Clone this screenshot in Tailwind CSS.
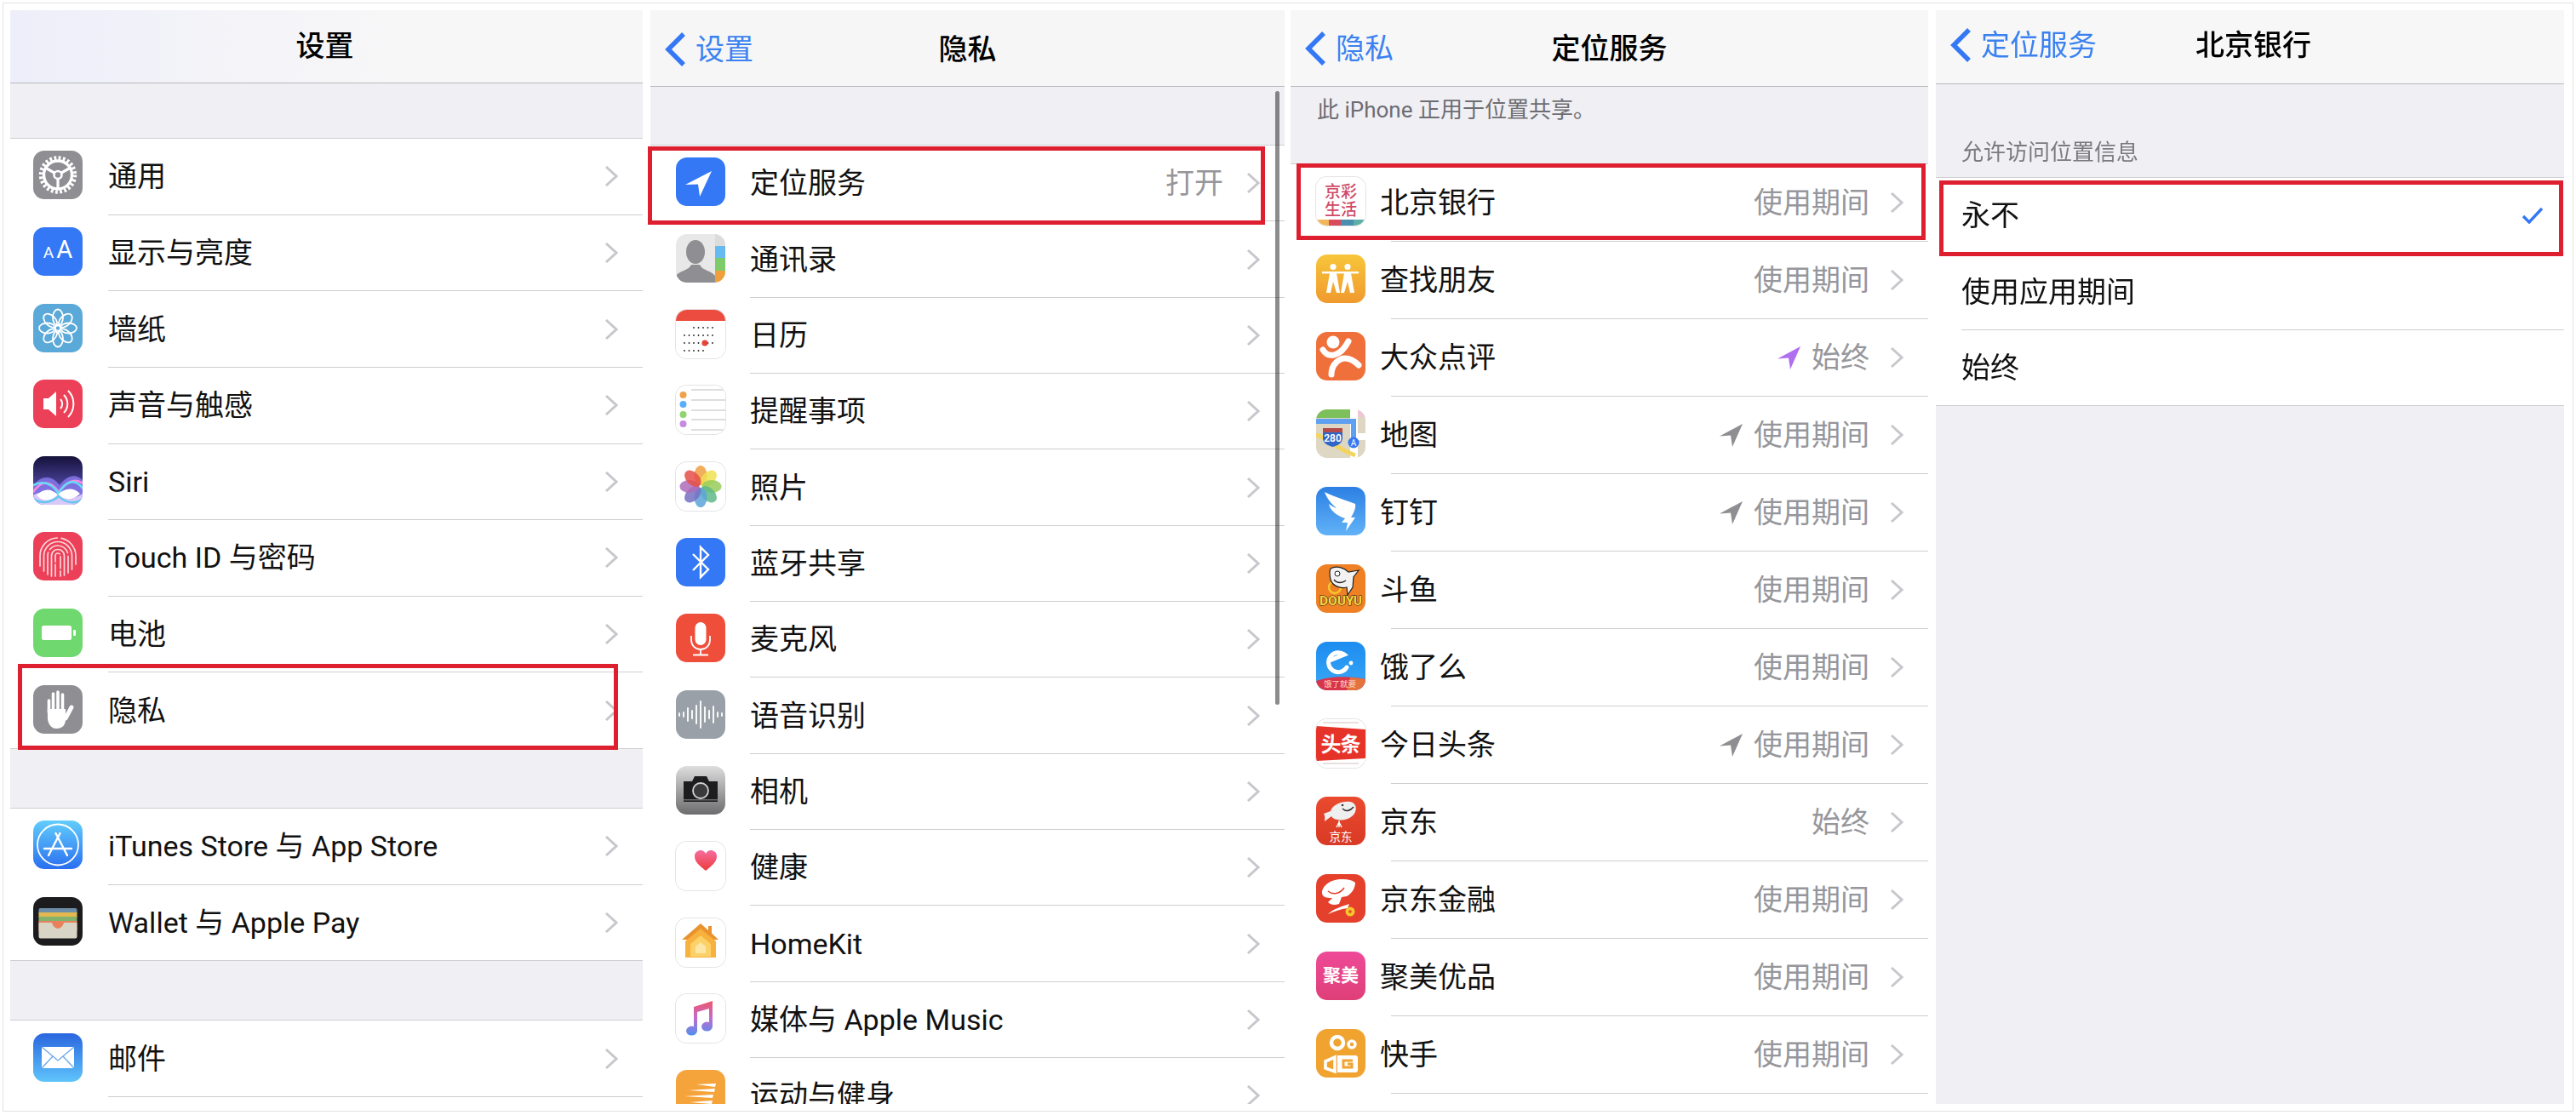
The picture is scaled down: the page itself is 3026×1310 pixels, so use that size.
<!DOCTYPE html>
<html lang="zh-CN">
<head>
    <meta charset="UTF-8">
    <title>iOS 定位服务设置</title>
    <script src="https://cdn.jsdelivr.net/npm/@tailwindcss/browser@4"></script>
</head>
<body class="bg-white">
<div class="w-[3026px] h-[1310px] bg-white pt-[3px] pl-[3px] overflow-hidden [font-family:Roboto,'Noto_Sans_CJK_SC',sans-serif] text-[#111]">
    <div class="w-[3020px] h-[1303px] border border-[#e2e2e4] flex items-start pt-[8px] blur-[0.5px]">
        <section id="p1" class="relative w-[743px] h-[1285px] ml-[8px]"></section>
        <section id="p2" class="relative w-[745px] h-[1285px] ml-[9px]"></section>
        <section id="p3" class="relative w-[749px] h-[1285px] ml-[7px]"></section>
        <section id="p4" class="relative w-[738px] h-[1285px] ml-[9px]"></section>
    </div>
</div>

<script>
    const svg = (body) => `<svg viewBox="0 0 58 57" class="w-[58px] h-[57px]">${body}</svg>`;
    const grad = (id, a, b) => `<defs><linearGradient id="${id}" x1="0" y1="0" x2="0" y2="1"><stop offset="0" stop-color="${a}"/><stop offset="1" stop-color="${b}"/></linearGradient></defs><rect width="58" height="57" fill="url(#${id})"/>`;
    const solid = (c) => `<rect width="58" height="57" fill="${c}"/>`;
    const around = (n, fn) => Array.from({ length: n }, (_, i) => fn(i * 360 / n, i)).join('');

    const icons = {
        general: svg(solid('#8e8e93') + `<g fill="none" stroke="#fff">
            <circle cx="29" cy="28.5" r="20" stroke-width="4.5" stroke-dasharray="2.8 2.44"/>
            <circle cx="29" cy="28.5" r="16.5" stroke-width="3.4"/>
            <circle cx="29" cy="28.5" r="4.5" stroke-width="2.6"/>
            <path stroke-width="3.2" d="M29 33V45M25 26.2L15 20.5M33 26.2L43 20.5"/></g>`),
        display: `<div class="w-full h-full bg-[#3478f6] flex items-baseline justify-center pt-[12px] text-white leading-none"><span class="text-[19px] mr-[3px]">A</span><span class="text-[29px]">A</span></div>`,
        wallpaper: svg(solid('#5aa9d8') + `<g fill="none" stroke="#fff" stroke-width="1.8">` + around(8, a => `<ellipse cx="29" cy="16" rx="6" ry="9.5" transform="rotate(${a} 29 28.5)"/>`) + `<circle cx="29" cy="28.5" r="3.5"/></g>`),
        sounds: svg(solid('#ec4058') + `<path fill="#fff" d="M12 22h6l9-8v29l-9-8h-6z"/><g fill="none" stroke="#fff" stroke-width="2"><path d="M32 23a8 8 0 0 1 0 11"/><path d="M36 18a15 15 0 0 1 0 21"/><path d="M41 13a22 22 0 0 1 0 31"/></g>`),
        siri: svg(grad('siriBg', '#15123a', '#6f63dc') + `
            <path fill="#8a7cf0" opacity=".8" d="M0 34C10 22 22 22 31 34C40 22 50 20 58 28V57H0Z"/>
            <path fill="none" stroke="#f58ade" stroke-width="2.6" d="M0 42C10 28 20 28 30 42C38 32 48 24 58 32"/>
            <path fill="none" stroke="#63dcf7" stroke-width="2.6" d="M0 34C12 28 22 32 30 44C38 28 50 26 58 38"/>
            <path fill="#d9c8f7" d="M0 46C8 40 20 42 29 46C38 50 50 50 58 44V57H0Z"/>
            <path fill="#fff" d="M4 46C13 37 21 38 29 45C37 52 47 52 55 44C47 36 37 37 29 45C21 53 12 54 4 46Z"/>
            <path fill="none" stroke="#63c8f0" stroke-width="2.4" d="M0 50C12 57 22 54 30 47C38 55 50 57 58 50"/>`),
        touch: svg(solid('#ec4058') + `<g fill="none" stroke="#fbd6db" stroke-width="1.7" stroke-linecap="round">
            <path d="M8 40V28A21 21 0 0 1 50 28V38" stroke-dasharray="44 5"/>
            <path d="M12.5 46V28A16.5 16.5 0 0 1 45.5 28V44"/>
            <path d="M17 50V28A12 12 0 0 1 41 28V48" stroke-dasharray="26 4"/>
            <path d="M21.5 52V28A7.5 7.5 0 0 1 36.5 28V51"/>
            <path d="M26 52V28A3 3 0 0 1 32 28V52" stroke-dasharray="14 3"/></g>`),
        battery: svg(solid('#6fd96f') + `<rect x="10" y="20" width="35" height="17" rx="2.5" fill="#fff"/><rect x="47" y="25" width="3" height="7" rx="1" fill="#fff"/>`),
        privacy: svg(solid('#8e8e93') + `<g stroke="#fff" stroke-linecap="round" fill="none"><path stroke-width="3.6" d="M18.5 18V32M23.5 10V32M29 8V32M34.5 11V32"/><path stroke-width="5" d="M38 39L45 26"/></g><path fill="#fff" d="M16.8 28H38V40C38 47 34 51 27.5 51C21 51 18 46 17 40Z"/>`),
        appstore: svg(grad('asBg', '#62cdfb', '#2a6ff0') + `<circle cx="29" cy="28.5" r="24" fill="none" stroke="#fff" stroke-width="1.8"/><path fill="none" stroke="#fff" stroke-width="2.4" stroke-linecap="round" d="M18 41L31.5 15M40 41L26.5 15M13 33H45"/>`),
        wallet: svg(solid('#1c1c1e') + `<rect x="6.5" y="13" width="45" height="8" rx="2" fill="#6d8ea8"/><rect x="6.5" y="18" width="45" height="6" fill="#e3b84e"/><rect x="6.5" y="23" width="45" height="6" fill="#82b26c"/><rect x="6.5" y="28" width="45" height="12" fill="#e8815c"/><path fill="#d9d5c6" d="M6.5 30H22C23 34 26 37 29 37C32 37 35 34 36 30H51.5V46.5A2 2 0 0 1 49.5 48.5H8.5A2 2 0 0 1 6.5 46.5Z"/>`),
        mail: svg(grad('mailBg', '#2a66df', '#5fc4fb') + `<rect x="10" y="16" width="38" height="25" fill="#fff"/><path fill="none" stroke="#6aa6ea" stroke-width="1.3" d="M10 16L29 32L48 16M10 41L23 27M48 41L35 27"/>`),

        location: svg(solid('#3478f6') + `<path fill="#fff" d="M42 16L11 32L26 31.5L28 46Z"/>`),
        contacts: svg(solid('#e8e8e8') + `<ellipse cx="23" cy="21" rx="11" ry="14" fill="#8e8e93"/><path fill="#8e8e93" d="M0 57V49C4 43 15 43 18 36H28C31 43 42 43 46 49V57Z"/><rect x="46" width="12" height="14" fill="#dcdcdc"/><rect x="46" y="14" width="12" height="14" fill="#67baf0"/><rect x="46" y="28" width="12" height="15" fill="#7ecb6b"/><rect x="46" y="43" width="12" height="14" fill="#f0a03a"/>`),
        calendar: svg(solid('#fff') + `<rect width="58" height="13" fill="#ec4c3f"/>` +
            [[21, 21, 48], [30, 10, 48], [39, 10, 48], [48, 10, 37]].map(([y, a, b]) => { let s = ''; for (let x = a; x <= b; x += 5.5) s += `<circle cx="${x}" cy="${y}" r="0.9" fill="#222"/>`; return s; }).join('') +
            `<circle cx="34" cy="39" r="3.6" fill="#e8453a"/>`),
        reminders: svg(solid('#fff') + `<g stroke="#bdbdbd" stroke-width="1"><path d="M18 5H58M18 17H58M18 29H58M18 40H58M18 52H58"/></g><circle cx="8.5" cy="11" r="4" fill="#f0a24a"/><circle cx="8.5" cy="22" r="4" fill="#5aaef5"/><circle cx="8.5" cy="34" r="4" fill="#8fd46f"/><circle cx="8.5" cy="45" r="4" fill="#c58be0"/>`),
        photos: svg(solid('#fff') + around(8, (a, i) => `<ellipse cx="29" cy="15.5" rx="7.5" ry="11.5" fill="${['#f0a040', '#efe050', '#97cc5c', '#5fb888', '#5aa5d8', '#7470c4', '#ae6cb8', '#e5504a'][i]}" opacity=".85" transform="rotate(${a} 29 28.5)"/>`)),
        bluetooth: svg(solid('#3478f6') + `<path fill="none" stroke="#fff" stroke-width="2.4" d="M20 19L38 37L29 46V11L38 20L20 38"/>`),
        mic: svg(solid('#ef4e3b') + `<rect x="22.5" y="10" width="13" height="27" rx="6.5" fill="#fff"/><g fill="none" stroke="#fff" stroke-width="1.8"><path d="M18 26V31A11 11 0 0 0 40 31V26"/><path d="M29 42V48M20 48.5H38"/></g>`),
        speech: svg(solid('#9aa0a8') + `<g stroke="#fff" stroke-width="2" stroke-linecap="round" opacity=".92"><path d="M4 27V30M9 26V31M14 21V36M19 24V33M24 18V39M29 13V44M34 20V37M39 24V33M44 19V38M49 26V31M54 27V30"/></g>`),
        camera: svg(grad('camBg', '#dedede', '#6c6c6e') + `<path fill="#1d1d1f" d="M9 18H19L22 12H36L39 18H49V42H9Z"/><circle cx="29" cy="29" r="9" fill="#3a3a3c" stroke="#d0d0d0" stroke-width="1.8"/><rect x="9" y="39" width="40" height="1.5" fill="#6a6a6a"/>`),
        health: svg(solid('#fff') + `<defs><linearGradient id="heart" x1="0" y1="0" x2="0" y2="1"><stop offset="0" stop-color="#f56ea0"/><stop offset="1" stop-color="#ee3a3a"/></linearGradient></defs><path fill="url(#heart)" d="M35 34C28 28 22 24 22 17C22 12 26 10 29 10C32 10 34 12 35 14C36 12 38 10 41 10C44 10 48 12 48 17C48 24 42 28 35 34Z"/>`),
        homekit: svg(solid('#fff') + `<path fill="#e9932f" d="M7 25L29 6L38 14V9H42V17.5L50 25H45V46H13V25Z"/><path fill="#f8b13c" d="M11 27L29 12L47 27V46H11Z"/><path fill="#fbd168" d="M17 30L29 20L41 30V45H17Z"/><path fill="#fde7a6" d="M23 33L29 28L35 33V41H23Z"/>`),
        music: svg(solid('#fff') + `<defs><linearGradient id="note" x1="0" y1="0" x2="0" y2="1"><stop offset="0" stop-color="#f0566a"/><stop offset=".5" stop-color="#c06cd0"/><stop offset="1" stop-color="#4f90ee"/></linearGradient></defs><path fill="url(#note)" d="M21 15L43 8V38A6.5 5.5 0 1 1 39 33V17L25 21V43A6.5 5.5 0 1 1 21 38Z"/>`),
        fitness: svg(solid('#f5a33b') + `<path fill="#fff" d="M24 17L47 16L46 20ZM15 24L46 22L45 26ZM10 31L44 29L43 33ZM16 38L43 36L42 40ZM6 46L41 43L40 47Z"/>`),

        bank: `<div class="w-full h-full bg-white flex flex-col"><div class="flex-1 grid grid-cols-2 w-[38px] mx-auto pt-[8px] text-[#cf4a68] text-[19px] leading-[20px] font-medium text-center"><span>京</span><span>彩</span><span>生</span><span>活</span></div><div class="h-[7px] flex"><i class="flex-1 bg-[#f1b659]"></i><i class="flex-1 bg-[#d94a5c]"></i><i class="flex-1 bg-[#4b8fb0]"></i><i class="flex-1 bg-[#5cb0a8]"></i></div></div>`,
        friends: svg(grad('ffBg', '#f8c53a', '#f09a2e') + `<g fill="#fff"><circle cx="20" cy="14.5" r="3.6"/><circle cx="37" cy="14.5" r="3.6"/><rect x="7" y="20" width="43" height="2.4"/><path d="M16 22H24L28 45H24L20 32L17 45H12Z"/><path d="M33 22H41L45 45H40L37 32L33 45H29Z"/></g>`),
        dianping: svg(solid('#f0703c') + `<circle cx="20" cy="12" r="7.5" fill="#fff"/><g fill="none" stroke="#fff" stroke-width="7" stroke-linecap="round"><path d="M8 21C14 31 28 30 38 11"/><path d="M18 50C18 37 28 31 34 31C40 31 46 35 50 39"/></g>`),
        maps: svg(solid('#ddd7c3') + `<rect width="40" height="10" fill="#7dbf5a"/><rect x="49" width="9" height="9" fill="#efc6d5"/><rect x="40" width="9" height="57" fill="#fff"/><rect x="40" y="28" width="18" height="8" fill="#fff"/><path fill="none" stroke="#f4d35e" stroke-width="5" d="M0 30C14 34 20 44 46 54"/><path fill="none" stroke="#5fa0f0" stroke-width="6" d="M0 14H44V36"/><path fill="#2f66c8" d="M8 22H31V34C31 40 24 43 19.5 44C15 43 8 40 8 34Z"/><rect x="8" y="22" width="23" height="5" fill="#b54a4a"/><text x="19.5" y="38" fill="#fff" font-size="12" text-anchor="middle" font-weight="600">280</text><circle cx="44" cy="39" r="6.5" fill="#3478f6"/><text x="44" y="43" fill="#fff" font-size="10" text-anchor="middle">A</text>`),
        dingding: svg(grad('ddBg', '#2c80e3', '#62b2f8') + `<path fill="#fff" d="M10 6C22 12 36 16 46 20C47 25 44 31 41 36L46 36L35 52L37 42L30 42L34 37C24 34 16 27 15 20C19 23 21 24 24 25C18 20 13 14 10 6Z"/>`),
        douyu: svg(solid('#ef8024') + `<circle cx="22" cy="27" r="7" fill="none" stroke="#f7c52d" stroke-width="2.5"/><path fill="#f2f2f2" stroke="#222" stroke-width="1.2" d="M17 5C24 1 33 4 38 9L50 7L44 15L43 27L37 36L36 27C28 29 19 25 17 18C16 13 15 9 17 5Z"/><circle cx="25" cy="11" r="3" fill="#fff" stroke="#222"/><path stroke="#222" stroke-width="1.3" fill="none" d="M21 18C25 23 31 22 35 19"/><text x="29" y="48" text-anchor="middle" font-size="14.5" font-weight="800" fill="#f7d23a" stroke="#1a1a1a" stroke-width="1" paint-order="stroke" textLength="50" lengthAdjust="spacingAndGlyphs">DOUYU</text>`),
        eleme: svg(grad('elBg', '#1c8cf0', '#3aa8f6') + `<path fill="none" stroke="#fff" stroke-width="5" stroke-linecap="round" d="M16 22L33 15A11.5 11.5 0 1 0 36 30"/><circle cx="41" cy="25" r="2.4" fill="#fff"/><path fill="#d8344a" d="M0 46C16 40 40 40 58 44V57H0Z"/><path fill="#e8833a" opacity=".8" d="M40 42C46 42 52 43 58 44V57H36Z"/><text x="28" y="53" fill="#ffd9c8" font-size="9.5" text-anchor="middle">饿了就要</text>`),
        toutiao: svg(solid('#fff') + `<g stroke="#e8e0e0" stroke-width="2"><path d="M8 4H50M8 52H50"/></g><path fill="#e6332a" d="M0 8L58 12V46L0 49Z"/><text x="29" y="38" fill="#fff" font-size="24" font-weight="700" text-anchor="middle" textLength="47">头条</text>`),
        jd: svg(grad('jdBg', '#ea4a2e', '#d93a25') + `<path fill="#efefef" d="M9 20L17 17C20 9 30 5 40 6C46 7 48 12 46 18C43 25 33 29 26 27C22 27 19 25 18 23L10 29C10 26 11 23 9 20Z"/><path fill="none" stroke="#333" stroke-width="1.6" d="M31 14C35 18 40 17 44 12"/><circle cx="31" cy="10" r="1.3" fill="#333"/><path stroke="#fff" stroke-width="1.4" fill="none" d="M27 28V36M24 36L27 30L30 36"/><text x="29" y="52" fill="#fff" font-size="13.5" text-anchor="middle">京东</text>`),
        jdfin: svg(solid('#e5402c') + `<path fill="#fff" d="M7 22C7 12 20 5 32 6C38 6 42 7 46 10C46 16 42 23 36 26L30 27L27 35C21 37 17 36 14 33L19 28C12 28 7 27 7 22Z"/><path fill="#fff" d="M14 47C20 41 30 38 39 35L37 40C29 41 21 44 14 47Z"/><path fill="none" stroke="#e5402c" stroke-width="1.6" d="M14 20C20 25 28 23 33 16"/><circle cx="40" cy="44" r="5.5" fill="#f7c52d"/><circle cx="40" cy="44" r="1.8" fill="#e5402c"/>`),
        jumei: `<div class="w-full h-full bg-[linear-gradient(#ee4a98,#df3f78)] flex items-center justify-center text-white text-[21px] font-bold leading-none">聚美</div>`,
        kuaishou: svg(solid('#f0a32f') + `<g fill="none" stroke="#fff"><circle cx="25" cy="16" r="7" stroke-width="4.5"/><circle cx="42" cy="18" r="4" stroke-width="3.5"/><path stroke-width="3.6" d="M11 38L22 33V50L11 46Z"/></g><path fill="#fff" d="M25 31H46C48 31 49 32 49 34V48C49 50 48 51 46 51H25Z"/><path fill="none" stroke="#f0a32f" stroke-width="3" d="M43 37H32V45H42V41H37"/>`),
    };

    const chevron = `<svg viewBox="0 0 16 26" class="w-[16px] h-[26px] shrink-0"><path d="M2 2L14 13L2 24" fill="none" stroke="#c7c7cc" stroke-width="3"/></svg>`;
    const arrow = (color) => `<svg viewBox="0 0 28 28" class="w-[28px] h-[28px] mr-[13px]"><path d="M28 1L1 15.5L14 14.5L16 28Z" fill="${color}"/></svg>`;
    const iconBox = (name, light) => `<div class="w-[58px] h-[57px] mb-[3px] shrink-0 rounded-[13px] overflow-hidden ${light ? 'ring-1 ring-[#e4e4e7]' : ''}">${icons[name]}</div>`;
    const lightIcons = ['calendar', 'reminders', 'photos', 'health', 'homekit', 'music', 'bank', 'toutiao'];

    function rows(list, c, fullLast) {
        return list.map((r, i) => `
            <div class="flex items-center ${c.h} ${c.pad}">
                ${r.icon ? iconBox(r.icon, lightIcons.includes(r.icon)) : ''}
                <span class="${c.gap} text-[34px] leading-[40px] whitespace-nowrap">${r.label}</span>
                <div class="ml-auto flex items-center">
                    ${r.arrow ? arrow(r.arrow) : ''}
                    ${r.value ? `<span class="${c.vgap} text-[34px] leading-[40px] text-[#96969b]">${r.value}</span>` : ''}
                    ${r.check || ''}
                    ${c.noChevron ? '' : chevron}
                </div>
            </div>
            <div class="h-px bg-[#cfcfd3] ${fullLast && i === list.length - 1 ? '' : c.sep}"></div>`).join('');
    }

    function nav(title, back, offset, titleCls = '') {
        return `<div class="h-full grid grid-cols-[1fr_auto_1fr] items-center ${offset}">
            <div class="flex items-center pl-[16px] text-[#3b82f0] text-[34px] leading-[40px]">
                ${back ? `<svg viewBox="0 0 26 42" class="w-[26px] h-[42px] mr-[11px]"><path d="M23 3L5 21L23 39" fill="none" stroke="#3478f6" stroke-width="5.5"/></svg>${back}` : ''}
            </div>
            <div class="text-[34px] leading-[40px] font-medium text-black ${titleCls}">${title}</div>
            <div></div>
        </div>`;
    }

    const frame = 'h-full overflow-hidden bg-white flex flex-col';
    const callout = (cls) => `<div class="absolute border-[5px] border-[#dd1f2f] ${cls}"></div>`;

    // 设置
    const c1 = { h: 'h-[88.64px]', pad: 'pl-[27px] pr-[29px]', gap: 'ml-[30px]', sep: 'ml-[115px]' };
    document.getElementById('p1').innerHTML = `<div class="${frame}">
        <div class="h-[86px] shrink-0 border-b border-[#b9b9bd] bg-[linear-gradient(90deg,#edeef9,#f3f3f9_30%,#f7f7f8_60%)]">${nav('设置', '', 'pb-[2px] pr-[4px]')}</div>
        <div class="h-[65px] shrink-0 bg-[#efeff4] border-b border-[#cfcfd3]"></div>
        ${rows([
            { icon: 'general', label: '通用' }, { icon: 'display', label: '显示与亮度' }, { icon: 'wallpaper', label: '墙纸' },
            { icon: 'sounds', label: '声音与触感' }, { icon: 'siri', label: 'Siri' }, { icon: 'touch', label: 'Touch ID 与密码' },
            { icon: 'battery', label: '电池' }, { icon: 'privacy', label: '隐私' }], c1, true)}
        <div class="h-[70px] shrink-0 bg-[#efeff4] border-b border-[#cfcfd3]"></div>
        ${rows([{ icon: 'appstore', label: 'iTunes Store 与 App Store' }, { icon: 'wallet', label: 'Wallet 与 Apple Pay' }], c1, true)}
        <div class="h-[70px] shrink-0 bg-[#efeff4] border-b border-[#cfcfd3]"></div>
        ${rows([{ icon: 'mail', label: '邮件' }], c1, false)}
    </div>` + callout('left-[9px] top-[768px] w-[705px] h-[101px]');

    // 隐私
    const c2 = { h: 'h-[88.35px] shrink-0', pad: 'pl-[30px] pr-[29px]', gap: 'ml-[29px]', vgap: 'mr-[27px]', sep: 'ml-[117px] shrink-0' };
    document.getElementById('p2').innerHTML = `<div class="${frame}">
        <div class="h-[90px] shrink-0 bg-[#f6f6f7] border-b border-[#b9b9bd]">${nav('隐私', '设置', 'pt-[3px]')}</div>
        <div class="h-[69px] shrink-0 bg-[#efeff4] border-b border-[#cfcfd3]"></div>
        ${rows([
            { icon: 'location', label: '定位服务', value: '打开' }, { icon: 'contacts', label: '通讯录' }, { icon: 'calendar', label: '日历' },
            { icon: 'reminders', label: '提醒事项' }, { icon: 'photos', label: '照片' }, { icon: 'bluetooth', label: '蓝牙共享' },
            { icon: 'mic', label: '麦克风' }, { icon: 'speech', label: '语音识别' }, { icon: 'camera', label: '相机' },
            { icon: 'health', label: '健康' }, { icon: 'homekit', label: 'HomeKit' }, { icon: 'music', label: '媒体与 Apple Music' },
            { icon: 'fitness', label: '运动与健身' }], c2, false)}
    </div>
    <div class="absolute left-[734px] top-[95px] w-[5px] h-[721px] rounded-full bg-black/45"></div>` + callout('left-[-3px] top-[160px] w-[725px] h-[92px]');

    // 定位服务
    const c3 = { h: 'h-[90px] shrink-0', pad: 'pl-[30px] pr-[29px]', gap: 'ml-[17px]', vgap: 'mr-[24px]', sep: 'ml-[118px] shrink-0' };
    const during = '使用期间', always = '始终', grey = '#8e8e93';
    document.getElementById('p3').innerHTML = `<div class="${frame}">
        <div class="h-[90px] shrink-0 bg-[#f7f7f8] border-b border-[#b9b9bd]">${nav('定位服务', '隐私', 'pt-[1px]')}</div>
        <div class="h-[91px] shrink-0 bg-[#efeff4] border-b border-[#cfcfd3] pl-[31px] pt-[12px] text-[26px] leading-[30px] text-[#6d6d72]">此 iPhone 正用于位置共享。</div>
        ${rows([
            { icon: 'bank', label: '北京银行', value: during }, { icon: 'friends', label: '查找朋友', value: during },
            { icon: 'dianping', label: '大众点评', value: always, arrow: '#b06ff0' }, { icon: 'maps', label: '地图', value: during, arrow: grey },
            { icon: 'dingding', label: '钉钉', value: during, arrow: grey }, { icon: 'douyu', label: '斗鱼', value: during },
            { icon: 'eleme', label: '饿了么', value: during }, { icon: 'toutiao', label: '今日头条', value: during, arrow: grey },
            { icon: 'jd', label: '京东', value: always }, { icon: 'jdfin', label: '京东金融', value: during },
            { icon: 'jumei', label: '聚美优品', value: during }, { icon: 'kuaishou', label: '快手', value: during }], c3, false)}
    </div>` + callout('left-[7px] top-[180px] w-[739px] h-[90px]');

    // 北京银行
    const c4 = { h: 'h-[88.4px] shrink-0', pad: 'pl-[30px] pr-[24px]', gap: '', vgap: '', sep: 'ml-[30px]', noChevron: true };
    const check = `<svg viewBox="0 0 26 20" class="w-[26px] h-[20px]"><path d="M2 11L9 18L24 2" fill="none" stroke="#3478f6" stroke-width="3.4"/></svg>`;
    document.getElementById('p4').innerHTML = `<div class="${frame}">
        <div class="h-[87px] shrink-0 bg-[#f7f7f8] border-b border-[#b9b9bd]">${nav('北京银行', '定位服务', 'pb-[4px]', 'ml-[8px]')}</div>
        <div class="h-[110px] shrink-0 bg-[#efeff4] border-b border-[#cfcfd3] flex items-end pl-[30px] pb-[14px] text-[26px] leading-[30px] text-[#7a7a80]">允许访问位置信息</div>
        ${rows([{ label: '永不', check }, { label: '使用应用期间' }, { label: '始终' }], c4, true)}
        <div class="flex-1 bg-[#efeff4]"></div>
    </div>` + callout('left-[4px] top-[200px] w-[733px] h-[89px]');
</script>
</body>
</html>
